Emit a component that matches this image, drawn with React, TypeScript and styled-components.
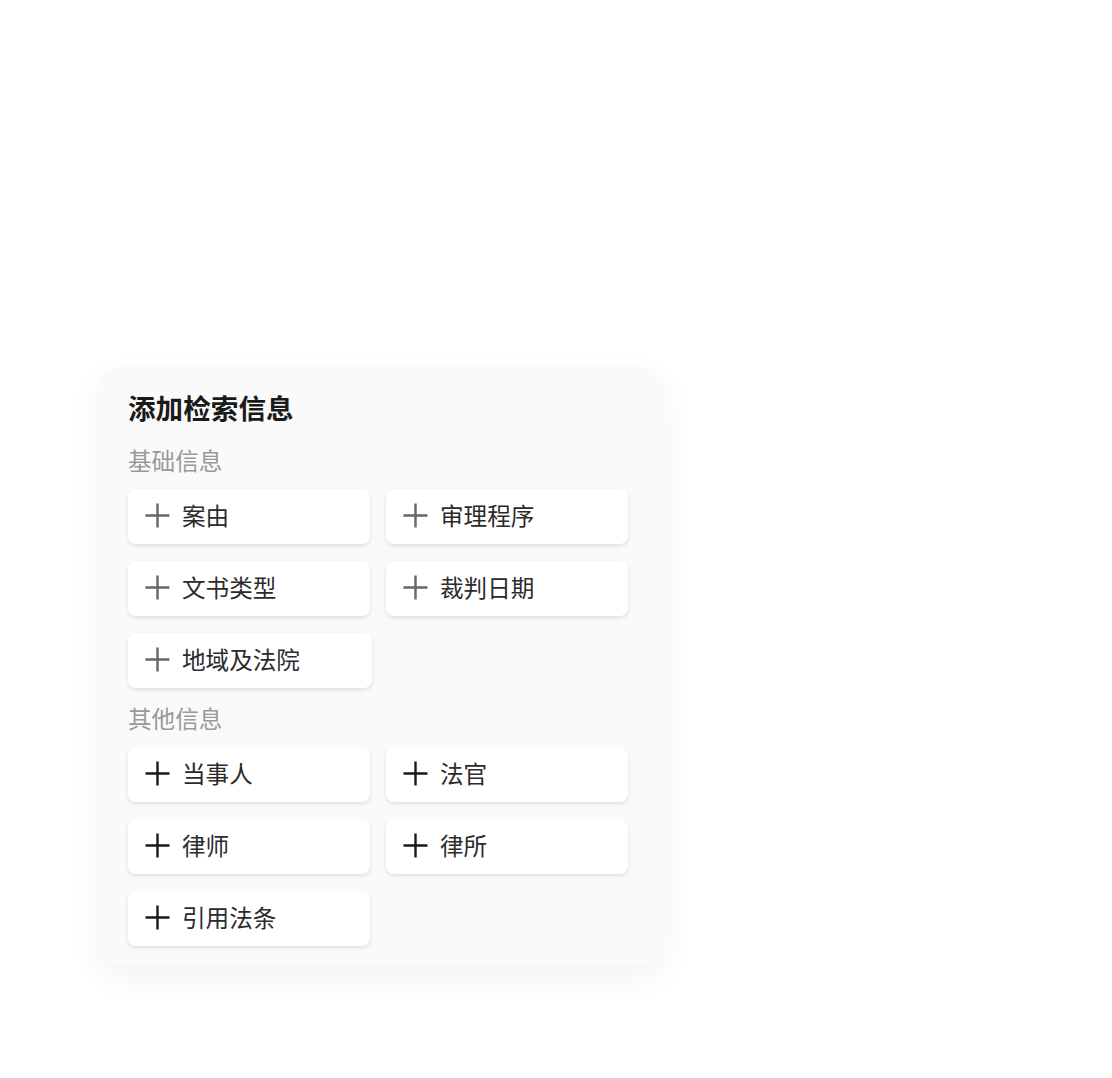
import React from "react";
import styled, { createGlobalStyle } from "styled-components";

const Global = createGlobalStyle`
  html, body { margin: 0; padding: 0; background: #ffffff; }
  body { font-family: "Noto Sans CJK SC", "Noto Sans", sans-serif; }
`;

const Page = styled.div`
  padding: 366px 0 0 96px;
  min-height: 1078px;
  box-sizing: border-box;
`;

const Card = styled.div`
  width: 570px;
  box-sizing: border-box;
  background: #fafafa;
  border-radius: 28px;
  padding: 23px 39px 20px 32px;
  box-shadow: 0 12px 32px rgba(0, 0, 0, 0.05);
  display: flex;
  flex-direction: column;
`;

const Title = styled.h2`
  margin: 0;
  font-size: 27.6px;
  line-height: 36px;
  font-weight: 700;
  color: #1a1a1a;
`;

const SectionLabel = styled.div<{ $first?: boolean }>`
  margin-top: ${(p) => (p.$first ? "19px" : "14px")};
  font-size: 23.6px;
  line-height: 32px;
  color: #999999;
`;

const Grid = styled.div`
  margin-top: 13px;
  display: grid;
  grid-template-columns: 242px 242px;
  column-gap: 16px;
  row-gap: 17px;
`;

const Chip = styled.button<{ $wide?: boolean }>`
  all: unset;
  box-sizing: border-box;
  height: 55px;
  width: ${(p) => (p.$wide ? "244px" : "242px")};
  background: #ffffff;
  border-radius: 8px;
  box-shadow: 0 2px 4px rgba(0, 0, 0, 0.11);
  display: flex;
  align-items: center;
  gap: 12px;
  padding-left: 17px;
  padding-bottom: 2px;
  cursor: pointer;
`;

const ChipText = styled.span`
  font-size: 23.6px;
  line-height: 1;
  color: #2b2b2b;
  font-family: "Noto Sans CJK SC", "Noto Sans", sans-serif;
`;

const PlusIcon = ({ color }: { color: string }) => (
  <svg width="25" height="25" viewBox="0 0 25 25" fill="none">
    <path d="M12.5 0.5V24.5M0.5 12.5H24.5" stroke={color} strokeWidth="2.4" />
  </svg>
);

const basic = ["案由", "审理程序", "文书类型", "裁判日期", "地域及法院"];
const other = ["当事人", "法官", "律师", "律所", "引用法条"];

export default function App() {
  return (
    <>
      <Global />
      <Page>
        <Card>
          <Title>添加检索信息</Title>
          <SectionLabel $first>基础信息</SectionLabel>
          <Grid>
            {basic.map((t) => (
              <Chip key={t} $wide={t === "地域及法院"}>
                <PlusIcon color="#666666" />
                <ChipText>{t}</ChipText>
              </Chip>
            ))}
          </Grid>
          <SectionLabel>其他信息</SectionLabel>
          <Grid>
            {other.map((t) => (
              <Chip key={t}>
                <PlusIcon color="#1a1a1a" />
                <ChipText>{t}</ChipText>
              </Chip>
            ))}
          </Grid>
        </Card>
      </Page>
    </>
  );
}
